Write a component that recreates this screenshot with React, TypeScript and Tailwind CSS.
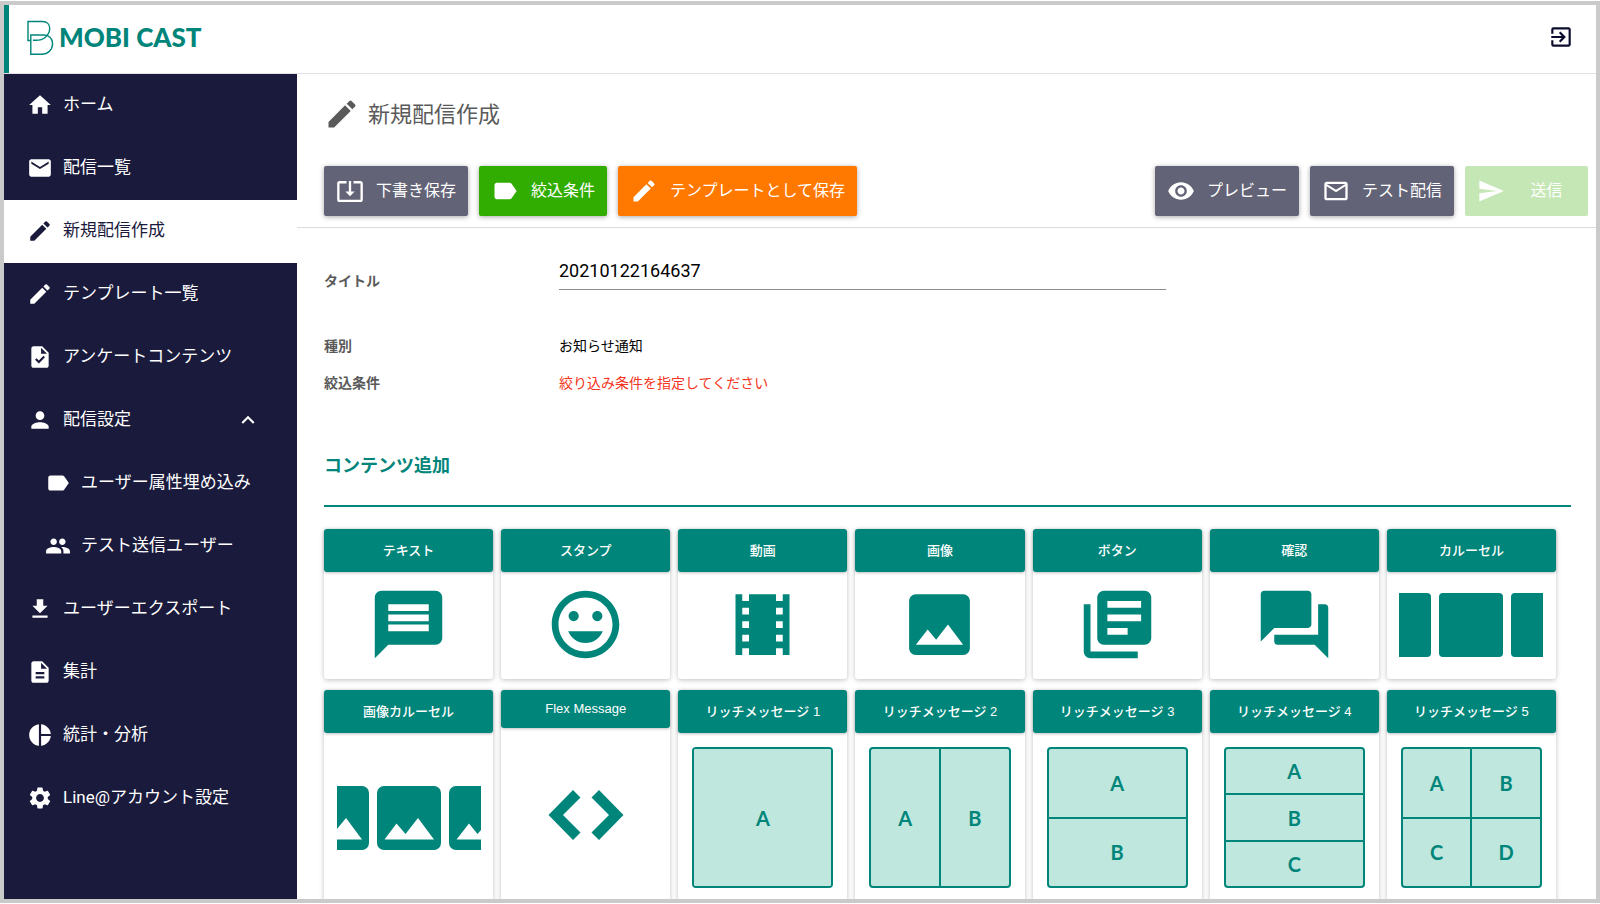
import React, { useState } from 'react';
import type { ReactNode } from 'react';
import type { IconType } from 'react-icons';
import {
    MdDescription,
    MdDownload,
    MdEdit,
    MdEmail,
    MdExitToApp,
    MdExpandLess,
    MdForum,
    MdHome,
    MdImage,
    MdInsertEmoticon,
    MdLabel,
    MdLibraryBooks,
    MdMailOutline,
    MdMessage,
    MdPeople,
    MdPerson,
    MdPieChart,
    MdSend,
    MdSettings,
    MdSystemUpdateAlt,
    MdTask,
    MdTheaters,
    MdVisibility,
} from 'react-icons/md';

type NavEntry = {
    label: string;
    icon: IconType;
    active?: boolean;
    children?: NavEntry[];
};

const navEntries: NavEntry[] = [
    { label: 'ホーム', icon: MdHome },
    { label: '配信一覧', icon: MdEmail },
    { label: '新規配信作成', icon: MdEdit, active: true },
    { label: 'テンプレート一覧', icon: MdEdit },
    { label: 'アンケートコンテンツ', icon: MdTask },
    {
        label: '配信設定',
        icon: MdPerson,
        children: [
            { label: 'ユーザー属性埋め込み', icon: MdLabel },
            { label: 'テスト送信ユーザー', icon: MdPeople },
        ],
    },
    { label: 'ユーザーエクスポート', icon: MdDownload },
    { label: '集計', icon: MdDescription },
    { label: '統計・分析', icon: MdPieChart },
    { label: 'Line@アカウント設定', icon: MdSettings },
];

const Logo = () => (
    <a href="#" className="flex items-center gap-1 pb-1 pl-4 text-[#00857a]">
        <svg width="30" height="38" viewBox="0 0 30 38" fill="none" stroke="currentColor" strokeWidth="1.4">
            <path d="M5.500 22.500H3V3.500h14.500c4.500 0 7.200 2.800 7.200 6.800 0 7-6.200 12-13.700 12H8" />
            <path d="M5.800 36.300V17h13.200c5.200 0 8.600 3.600 8.600 8.400 0 6.300-4.700 10.900-11.100 10.900z" />
        </svg>
        <span className="font-['Lato',sans-serif] text-[26px] leading-none font-black">MOBI CAST</span>
    </a>
);

const NavLink = ({ entry, nested = false }: { entry: NavEntry; nested?: boolean }) => {
    const Icon = entry.icon;
    return (
        <a
            href="#"
            aria-current={entry.active ? 'page' : undefined}
            className={`flex h-[63px] items-center gap-2.5 pb-0.5 ${nested ? 'pl-[41px]' : 'pl-[23px]'} ${
                entry.active ? 'bg-white text-[#1a1a3c]' : 'text-white hover:bg-white/10'
            }`}
        >
            <Icon className="size-[26px] shrink-0" />
            {entry.label}
        </a>
    );
};

const NavGroup = ({ entry }: { entry: NavEntry }) => {
    const [open, setOpen] = useState(true);
    const Icon = entry.icon;
    return (
        <div>
            <button
                type="button"
                aria-expanded={open}
                onClick={() => setOpen(!open)}
                className="flex h-[63px] w-full items-center gap-2.5 pr-9 pb-0.5 pl-[23px] text-left text-white hover:bg-white/10"
            >
                <Icon className="size-[26px] shrink-0" />
                <span className="flex-1">{entry.label}</span>
                <MdExpandLess className={`size-[26px] ${open ? '' : 'rotate-180'}`} />
            </button>
            {open && entry.children?.map((child) => <NavLink key={child.label} entry={child} nested />)}
        </div>
    );
};

type ActionProps = {
    label: string;
    icon: IconType;
    color: string;
    disabled?: boolean;
};

const ActionButton = ({ label, icon: Icon, color, disabled }: ActionProps) => (
    <button
        type="button"
        disabled={disabled}
        className={`flex h-[50px] items-center gap-3 rounded-xs px-3 text-base whitespace-nowrap text-white ${color} ${
            disabled ? 'min-w-[123px]' : 'shadow-[0_1px_5px_rgba(0,0,0,0.35)]'
        }`}
    >
        <Icon className="size-7 shrink-0" />
        <span className="flex-1 text-center">{label}</span>
    </button>
);

const CarouselIcon = () => (
    <svg width="144" height="64" viewBox="0 0 144 64" fill="currentColor">
        <path d="M0 0h28a4 4 0 0 1 4 4v56a4 4 0 0 1-4 4H0z" />
        <rect x="40" width="64" height="64" rx="4" />
        <path d="M144 0h-28a4 4 0 0 0-4 4v56a4 4 0 0 0 4 4h28z" />
    </svg>
);

const ImageCarouselIcon = () => (
    <svg width="144" height="64" viewBox="0 0 144 64" fill="currentColor">
        <path d="M0 0h25a7 7 0 0 1 7 7v50a7 7 0 0 1-7 7H0z" />
        <rect x="40" width="64" height="64" rx="7" />
        <path d="M144 0h-25a7 7 0 0 0-7 7v50a7 7 0 0 0 7 7h25z" />
        <g fill="#fff">
            <path d="M0 43l9-11 16 21.500H0z" />
            <path d="M47.500 53.500L59.500 37.500l9 10.500L81 32l16 21.500z" />
            <path d="M119.500 53.500l12.500-16 8.500 10.500 3.500-4v9.500z" />
        </g>
    </svg>
);

const BracketsIcon = () => (
    <svg width="76" height="52" viewBox="0 0 76 52" fill="currentColor">
        <path d="M25 1l7.500 7.500L15 26l17.500 17.500L25 51 0.500 26z" />
        <path d="M51 1l-7.500 7.500L61 26 43.500 43.500 51 51l24.500-25z" />
    </svg>
);

const RichLayout = ({ cells, layout }: { cells: string[]; layout: string }) => (
    <div
        className={`grid aspect-square w-full gap-0.5 overflow-hidden rounded-[4px] border-2 border-[#00857a] bg-[#00857a] ${layout}`}
    >
        {cells.map((cell) => (
            <div
                key={cell}
                className="flex items-center justify-center bg-[#bfe7de] font-['Lato',sans-serif] text-xl leading-none font-bold"
            >
                {cell}
            </div>
        ))}
    </div>
);

type ContentCard = {
    label: string;
    latin?: boolean;
    art: ReactNode;
};

const basicCards: ContentCard[] = [
    { label: 'テキスト', art: <MdMessage className="size-[81px]" /> },
    { label: 'スタンプ', art: <MdInsertEmoticon className="size-[81px]" /> },
    { label: '動画', art: <MdTheaters className="size-[81px]" /> },
    { label: '画像', art: <MdImage className="size-[81px]" /> },
    { label: 'ボタン', art: <MdLibraryBooks className="size-[81px]" /> },
    { label: '確認', art: <MdForum className="size-[81px]" /> },
    { label: 'カルーセル', art: <CarouselIcon /> },
];

const richCards: ContentCard[] = [
    { label: '画像カルーセル', art: <ImageCarouselIcon /> },
    { label: 'Flex Message', latin: true, art: <BracketsIcon /> },
    { label: 'リッチメッセージ 1', art: <RichLayout cells={['A']} layout="grid-cols-1" /> },
    { label: 'リッチメッセージ 2', art: <RichLayout cells={['A', 'B']} layout="grid-cols-2" /> },
    { label: 'リッチメッセージ 3', art: <RichLayout cells={['A', 'B']} layout="grid-rows-2" /> },
    { label: 'リッチメッセージ 4', art: <RichLayout cells={['A', 'B', 'C']} layout="grid-rows-3" /> },
    { label: 'リッチメッセージ 5', art: <RichLayout cells={['A', 'B', 'C', 'D']} layout="grid-cols-2 grid-rows-2" /> },
];

const CardRow = ({ cards, bodyClass }: { cards: ContentCard[]; bodyClass: string }) => (
    <div className="grid grid-cols-7 gap-2">
        {cards.map((card) => (
            <div key={card.label} className="flex flex-col rounded-[3px] bg-white shadow-[0_1px_5px_rgba(0,0,0,0.25)]">
                <button
                    type="button"
                    className={`w-full rounded-[3px] bg-[#00857a] font-['Liberation_Sans','Noto_Sans_CJK_JP',sans-serif] text-[13px] font-medium text-white shadow-[0_1px_3px_rgba(0,0,0,0.25)] ${
                        card.latin ? 'h-[38px]' : 'h-[43px]'
                    }`}
                >
                    {card.label}
                </button>
                <div className={`flex flex-1 items-center justify-center text-[#00857a] *:shrink-0 ${bodyClass}`}>
                    {card.art}
                </div>
            </div>
        ))}
    </div>
);

const App = () => {
    const [title, setTitle] = useState('20210122164637');

    return (
        <div className="h-screen overflow-hidden bg-white py-px font-['Roboto','Noto_Sans_CJK_JP',sans-serif]">
            <div className="flex h-full flex-col overflow-hidden border-4 border-[#cacaca]">
                {/* Header */}
                <header className="flex h-[69px] shrink-0 items-center justify-between border-b border-[#e2e2e4]">
                    <div className="flex h-full items-center border-l-[5px] border-[#00857a]">
                        <Logo />
                    </div>
                    <button type="button" aria-label="ログアウト" className="mr-[22px] pb-1 text-[#0c0c2c]">
                        <MdExitToApp className="size-[26px]" />
                    </button>
                </header>

                <div className="flex min-h-0 flex-1">
                    {/* Sidebar */}
                    <nav className="w-[293px] shrink-0 overflow-hidden bg-[#1a1a3c] text-[17px]">
                        {navEntries.map((entry) =>
                            entry.children ? (
                                <NavGroup key={entry.label} entry={entry} />
                            ) : (
                                <NavLink key={entry.label} entry={entry} />
                            ),
                        )}
                    </nav>

                    <main className="min-w-0 flex-1 overflow-hidden">
                        {/* Page title */}
                        <div className="flex h-20 items-center gap-2 pl-[27px] text-[#5a5a5a]">
                            <MdEdit className="size-9" />
                            <h1 className="text-[22px]">新規配信作成</h1>
                        </div>

                        {/* Toolbar */}
                        <div className="flex justify-between border-b border-[#dcdcdc] pt-3 pr-2 pb-[11px] pl-[27px]">
                            <div className="flex gap-[11px]">
                                <ActionButton label="下書き保存" icon={MdSystemUpdateAlt} color="bg-[#636377]" />
                                <ActionButton label="絞込条件" icon={MdLabel} color="bg-[#30ad00]" />
                                <ActionButton label="テンプレートとして保存" icon={MdEdit} color="bg-[#ff7800]" />
                            </div>
                            <div className="flex gap-[11px]">
                                <ActionButton label="プレビュー" icon={MdVisibility} color="bg-[#636377]" />
                                <ActionButton label="テスト配信" icon={MdMailOutline} color="bg-[#636377]" />
                                <ActionButton label="送信" icon={MdSend} color="bg-[#c5e7b5]" disabled />
                            </div>
                        </div>

                        {/* Delivery settings */}
                        <div className="pr-10 pl-[27px] text-sm">
                            <div className="flex pt-6">
                                <label htmlFor="title" className="w-[235px] shrink-0 pt-[19px] font-bold text-[#5a5a5a]">
                                    タイトル
                                </label>
                                <input
                                    id="title"
                                    type="text"
                                    value={title}
                                    onChange={(e) => setTitle(e.target.value)}
                                    className="h-[38px] w-full max-w-[607px] border-b border-[#8c8c8c] text-lg text-black outline-none"
                                />
                            </div>
                            <dl className="mt-[45px] grid grid-cols-[235px_1fr] gap-y-[17px] leading-5">
                                <dt className="font-bold text-[#5a5a5a]">種別</dt>
                                <dd className="text-black">お知らせ通知</dd>
                                <dt className="font-bold text-[#5a5a5a]">絞込条件</dt>
                                <dd className="text-[#f53521]">絞り込み条件を指定してください</dd>
                            </dl>
                        </div>

                        {/* Content palette */}
                        <h2 className="mt-[59px] mr-[25px] ml-[27px] border-b-2 border-[#00857a] pb-[25px] text-lg font-bold text-[#00857a]">
                            コンテンツ追加
                        </h2>
                        <div className="flex flex-col gap-[11px] pt-[22px] pr-10 pl-[27px]">
                            <CardRow cards={basicCards} bodyClass="min-h-[107px] pb-0.5" />
                            <CardRow cards={richCards} bodyClass="px-3.5 py-3.5" />
                        </div>
                    </main>
                </div>
            </div>
        </div>
    );
};

export default App;
